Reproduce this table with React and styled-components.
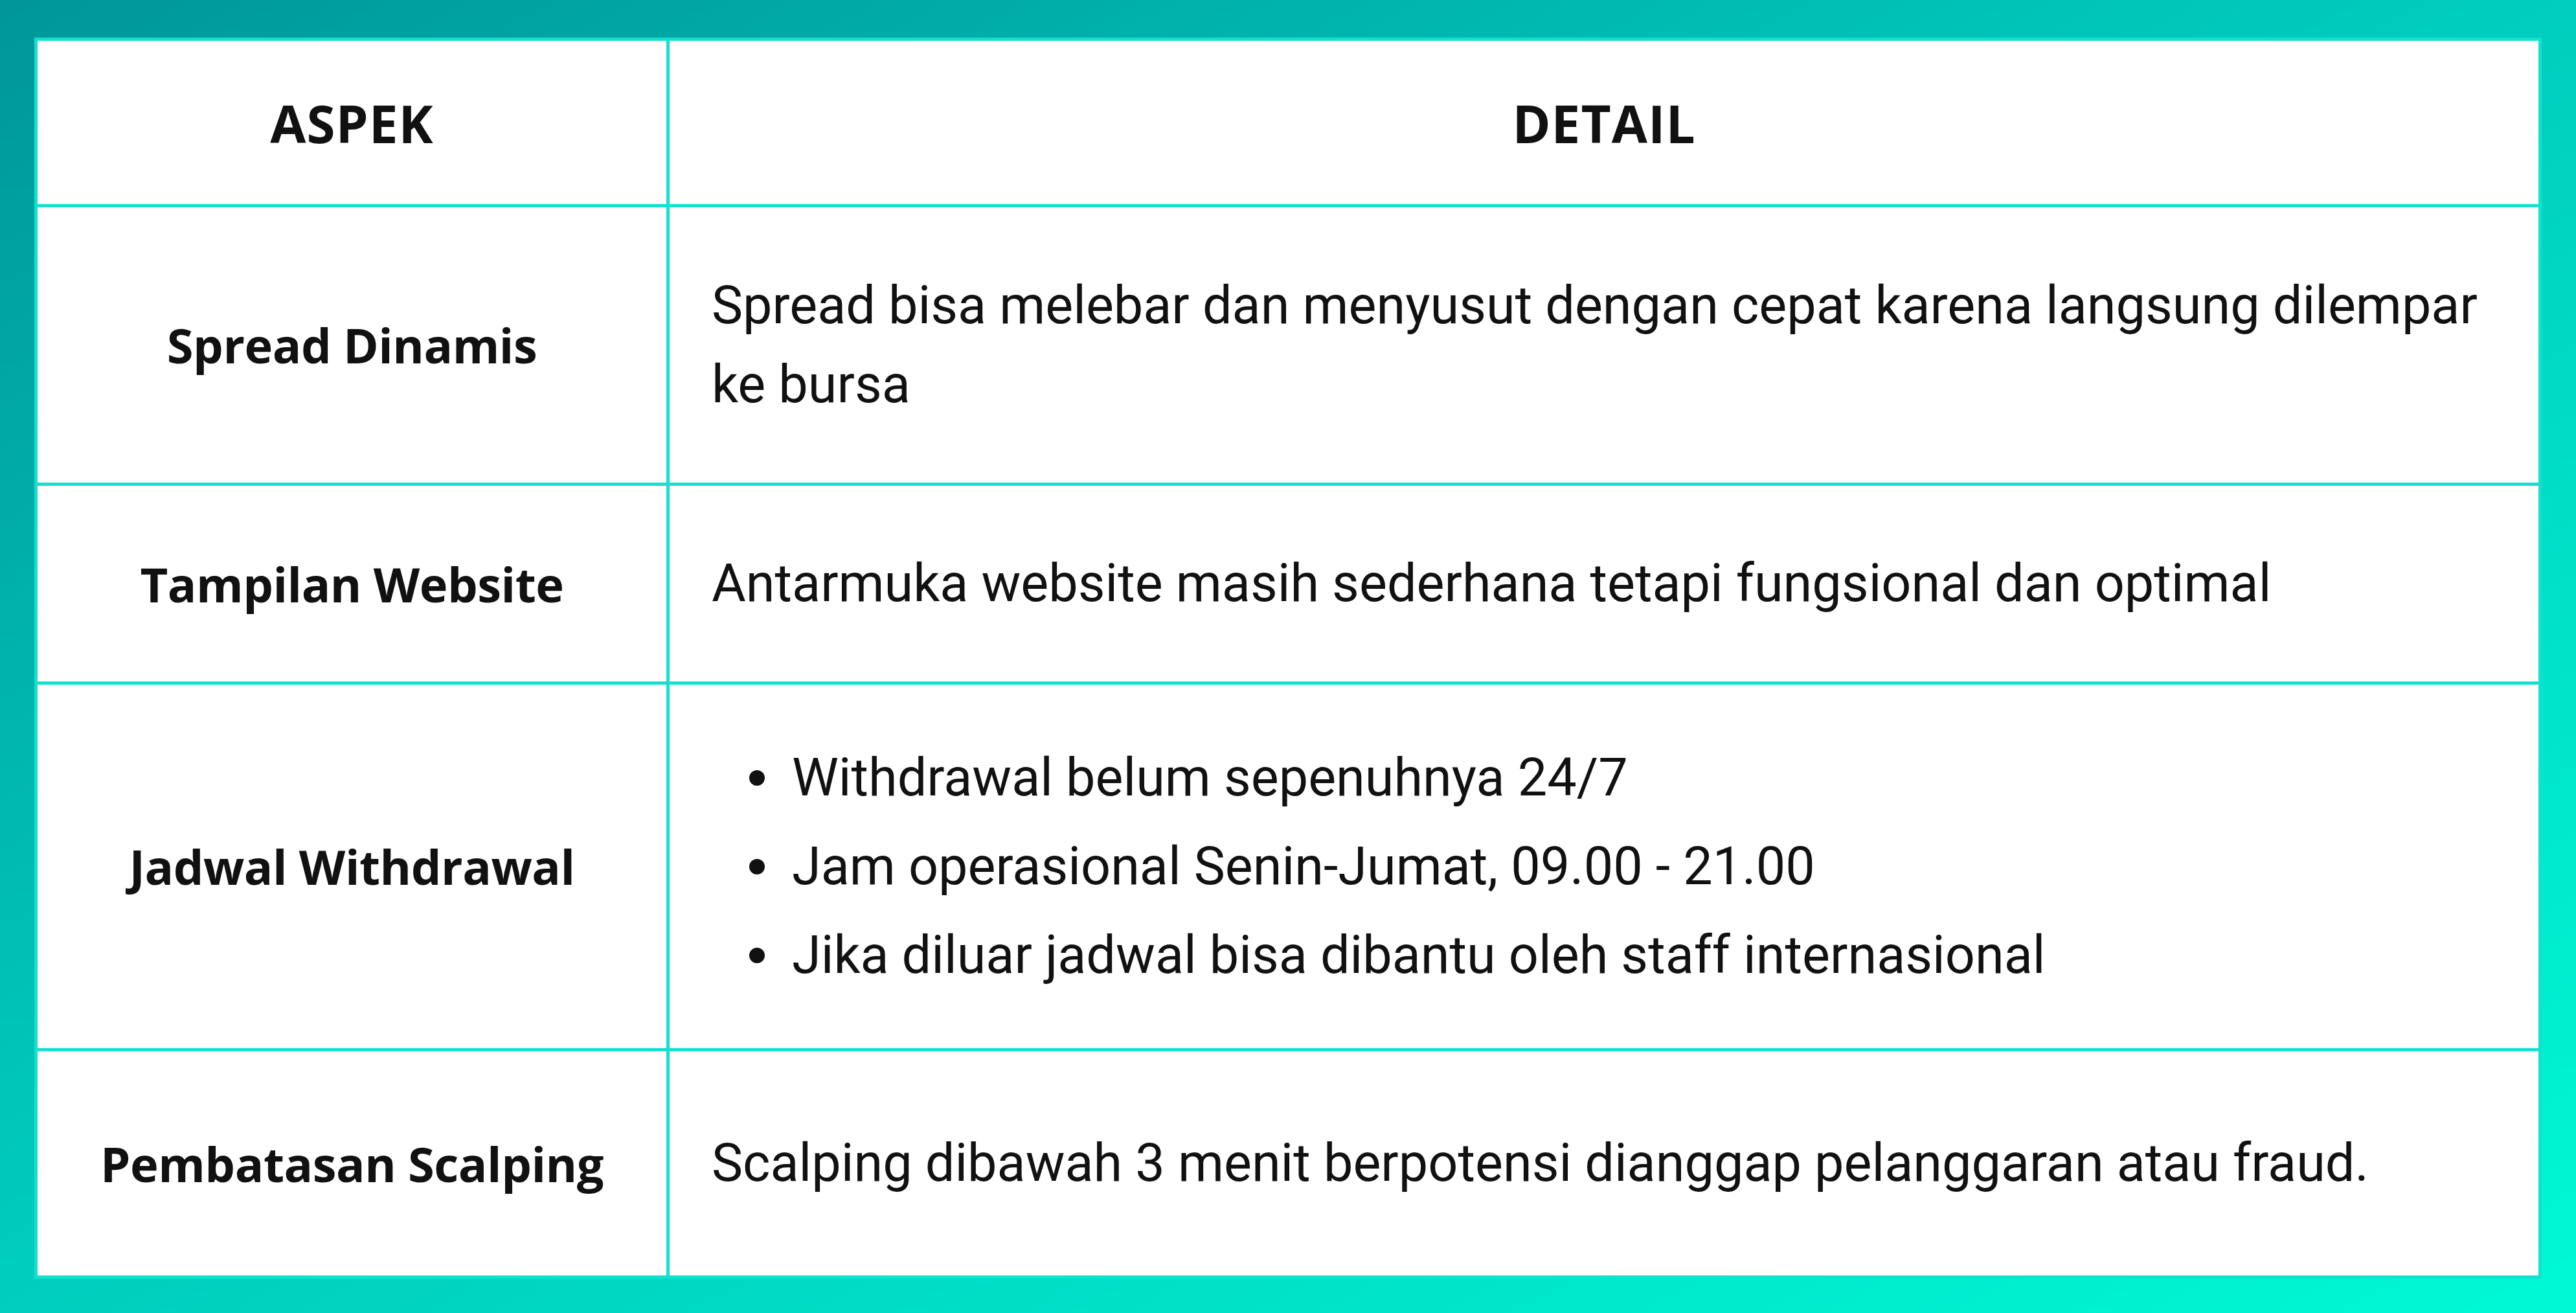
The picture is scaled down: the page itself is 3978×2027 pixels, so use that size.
import React from "react";
import styled, { createGlobalStyle } from "styled-components";

const GlobalStyle = createGlobalStyle`
  * { box-sizing: border-box; }
  html, body { margin: 0; padding: 0; }
  body {
    font-family: Roboto, "Liberation Sans", sans-serif;
    color: #111;
  }
`;

const Frame = styled.div`
  width: 100vw;
  height: 100vh;
  padding: 58px 53px 53px 53px;
  background: linear-gradient(to bottom right, #00969a 0%, #00c9bb 45%, #00f9d4 100%);
`;

const Table = styled.div`
  background: #fff;
  border: 5px solid #14e0cf;
  display: flex;
  flex-direction: column;
`;

const Row = styled.div`
  display: grid;
  grid-template-columns: 976px 1fr;
  height: ${(p) => p.$h}px;
  border-bottom: ${(p) => (p.$last ? "none" : "5px solid #14e0cf")};
`;

const Cell = styled.div`
  display: flex;
  align-items: center;
  justify-content: ${(p) => (p.$center ? "center" : "flex-start")};
  text-align: ${(p) => (p.$center ? "center" : "left")};
  padding: 0 60px 0 ${(p) => (p.$center ? "60px" : "65px")};
`;

const LabelCell = styled(Cell)`
  border-right: 5px solid #14e0cf;
`;

const HeadText = styled.span`
  font-family: "Open Sans", Roboto, sans-serif;
  font-weight: 700;
  font-size: 80px;
  letter-spacing: 1px;
`;

const Label = styled.span`
  font-family: "Open Sans", Roboto, sans-serif;
  font-weight: 700;
  font-size: 74px;
  letter-spacing: -0.5px;
`;

const Detail = styled.p`
  margin: 0;
  font-size: 81px;
  line-height: 122px;
  font-weight: 400;
`;

const List = styled.ul`
  margin: 0;
  padding: 0;
  list-style: none;
  display: flex;
  flex-direction: column;
`;

const Item = styled.li`
  display: flex;
  align-items: center;
  font-size: 81px;
  line-height: 137px;
  &::before {
    content: "";
    width: 24px;
    height: 24px;
    border-radius: 50%;
    background: #111;
    margin: 0 42px 0 58px;
    flex-shrink: 0;
  }
`;

const rows = [
  {
    label: "Spread Dinamis",
    h: 430,
    detail:
      "Spread bisa melebar dan menyusut dengan cepat karena langsung dilempar ke bursa",
  },
  {
    label: "Tampilan Website",
    h: 307,
    detail: "Antarmuka website masih sederhana tetapi fungsional dan optimal",
  },
  {
    label: "Jadwal Withdrawal",
    h: 566,
    list: [
      "Withdrawal belum sepenuhnya 24/7",
      "Jam operasional Senin-Jumat, 09.00 - 21.00",
      "Jika diluar jadwal bisa dibantu oleh staff internasional",
    ],
  },
  {
    label: "Pembatasan Scalping",
    h: 346,
    detail: "Scalping dibawah 3 menit berpotensi dianggap pelanggaran atau fraud.",
  },
];

export default function App() {
  return (
    <>
      <GlobalStyle />
      <Frame>
        <Table>
          <Row $h={257}>
            <LabelCell $center>
              <HeadText>ASPEK</HeadText>
            </LabelCell>
            <Cell $center>
              <HeadText>DETAIL</HeadText>
            </Cell>
          </Row>
          {rows.map((r, i) => (
            <Row key={r.label} $h={r.h} $last={i === rows.length - 1}>
              <LabelCell $center>
                <Label>{r.label}</Label>
              </LabelCell>
              <Cell>
                {r.list ? (
                  <List>
                    {r.list.map((t) => (
                      <Item key={t}>{t}</Item>
                    ))}
                  </List>
                ) : (
                  <Detail>{r.detail}</Detail>
                )}
              </Cell>
            </Row>
          ))}
        </Table>
      </Frame>
    </>
  );
}
